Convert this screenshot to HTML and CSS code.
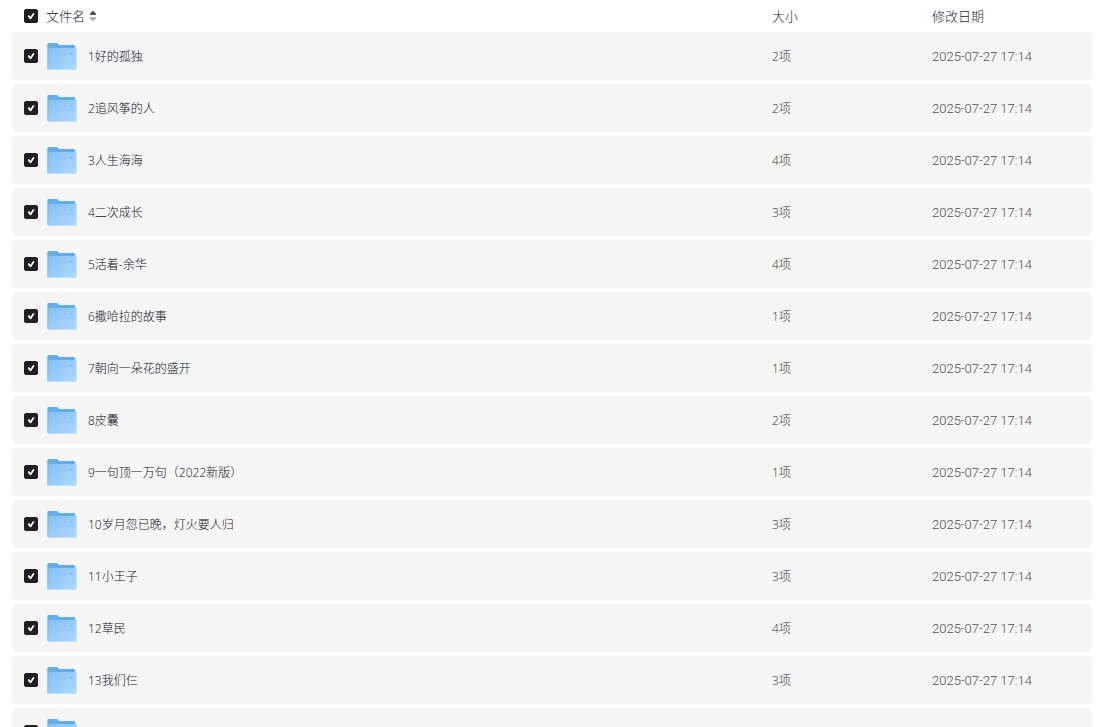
FILE: index.html
```html
<!DOCTYPE html>
<html lang="zh-CN">
<head>
    <meta charset="UTF-8">
    <meta name="viewport" content="width=device-width, initial-scale=1.0">
    <title>文件名</title>
    <link rel="stylesheet" href="styles.css">
</head>
<body>
    <svg class="defs" aria-hidden="true">
        <defs>
            <linearGradient id="folder-front" x1="0" y1="0" x2="1" y2="1">
                <stop offset="0" stop-color="#83c0f5"/>
                <stop offset="1" stop-color="#b0d9fd"/>
            </linearGradient>
            <symbol id="folder" viewBox="0 0 32 32">
                <path fill="#62aeeb" d="M1.4 4.2Q1.4 3 2.6 3H10.6Q11.4 3 11.8 3.6L13 5H28Q29.2 5 29.2 6.2V28Q29 29.5 28 29.5H2.6Q1.4 29.5 1.4 28.5Z"/>
                <path fill="url(#folder-front)" d="M3.4 8H29.6Q30.6 8 30.6 8.8V28.6Q30.6 30 29.4 30H2.8Q2 30 2 29.2L2.6 8.8Q2.6 8 3.4 8Z"/>
                <path fill="#c4e2fb" d="M29.8 9H30.6V29Q30.4 30 29.6 30H2.8Q2 30 2 29.2H29.8Z"/>
                <path fill="#83bff0" d="M23 13h4v2h-2v-1h-2z"/>
            </symbol>
        </defs>
    </svg>

    <main class="file-list">
        <table class="files">
            <thead>
                <tr>
                    <th class="name-col">
                        <div class="name-cell">
                            <input type="checkbox" class="check" aria-label="全选" checked>
                            <button class="sort" type="button">文件名
                                <svg class="sort-icon" viewBox="0 0 8 12" aria-hidden="true">
                                    <path fill="#555" d="M3.5 1H4.5L7 3.5V5H1V3.5Z"/>
                                    <path fill="#b5b5b5" d="M1 7H7V8.5L4.5 11H3.5L1 8.5Z"/>
                                </svg>
                            </button>
                        </div>
                    </th>
                    <th class="size-col">大小</th>
                    <th class="date-col">修改日期</th>
                </tr>
            </thead>
            <tbody id="rows"></tbody>
        </table>
    </main>

    <script>
        const files = [
            ["1好的孤独", "2项"],
            ["2追风筝的人", "2项"],
            ["3人生海海", "4项"],
            ["4二次成长", "3项"],
            ["5活着-余华", "4项"],
            ["6撒哈拉的故事", "1项"],
            ["7朝向一朵花的盛开", "1项"],
            ["8皮囊", "2项"],
            ["9一句顶一万句（2022新版）", "1项"],
            ["10岁月忽已晚，灯火要人归", "3项"],
            ["11小王子", "3项"],
            ["12草民", "4项"],
            ["13我们仨", "3项"],
            ["", ""]
        ];

        document.getElementById("rows").innerHTML = files.map(([name, size], i) => `
            <tr>
                <td>
                    <div class="name-cell">
                        <input type="checkbox" class="check" id="file-${i}" checked>
                        <label class="file-name" for="file-${i}">
                            <svg class="folder" aria-hidden="true"><use href="#folder"/></svg>
                            <span class="text">${name}</span>
                        </label>
                    </div>
                </td>
                <td class="text">${size}</td>
                <td class="text date">${name ? "2025-07-27 17:14" : ""}</td>
            </tr>`).join("");
    </script>
</body>
</html>
```
FILE: styles.css
```css
* {
    box-sizing: border-box;
}

body {
    margin: 0;
    background: #fff;
    color: #333;
    font-family: "Open Sans", "Noto Sans CJK SC", sans-serif;
    font-size: 12px;
    line-height: 20px;
}

.defs {
    position: absolute;
    width: 0;
    height: 0;
}

.file-list {
    height: 100vh;
    padding: 0 10px 0 12px;
    overflow: hidden;
}

.files {
    width: 100%;
    table-layout: fixed;
    border-collapse: separate;
    border-spacing: 0 4px;
}

.files th {
    height: 24px;
    padding: 0;
    color: #25253a;
    font-size: 13px;
    font-weight: 300;
    text-align: left;
}

.files td {
    height: 48px;
    padding: 0;
    background: #f5f5f5;
    font-weight: 300;
}

.files td:first-child {
    border-radius: 5px 0 0 5px;
}

.files td:last-child {
    border-radius: 0 5px 5px 0;
}

.size-col,
.date-col {
    width: 160px;
}

.name-cell {
    display: flex;
    align-items: center;
    gap: 8px;
    padding-left: 12px;
}

.check {
    appearance: none;
    flex: none;
    width: 14px;
    height: 14px;
    margin: 0;
    border: 1px solid #c8c8cc;
    border-radius: 2px;
    background: #fff;
}

.check:checked {
    border-color: #1e1f26;
    background: #1e1f26;
}

.check:checked::before {
    content: "";
    display: block;
    width: 12px;
    height: 12px;
    background: #fff;
    clip-path: polygon(22% 52%, 33% 42%, 46% 56%, 67% 24%, 80% 32%, 50% 78%, 42% 78%);
}

.sort {
    display: flex;
    align-items: center;
    gap: 4px;
    padding: 0;
    border: 0;
    background: none;
    color: inherit;
    font: inherit;
    cursor: pointer;
}

.sort-icon {
    width: 8px;
    height: 12px;
}

.file-name {
    display: flex;
    align-items: center;
    gap: 10px;
    color: #101026;
}

.folder {
    width: 32px;
    height: 32px;
}

.files .text {
    padding-top: 2px;
}

.date {
    color: #505050;
    font-family: Roboto, sans-serif;
    font-size: 13px;
}
```
